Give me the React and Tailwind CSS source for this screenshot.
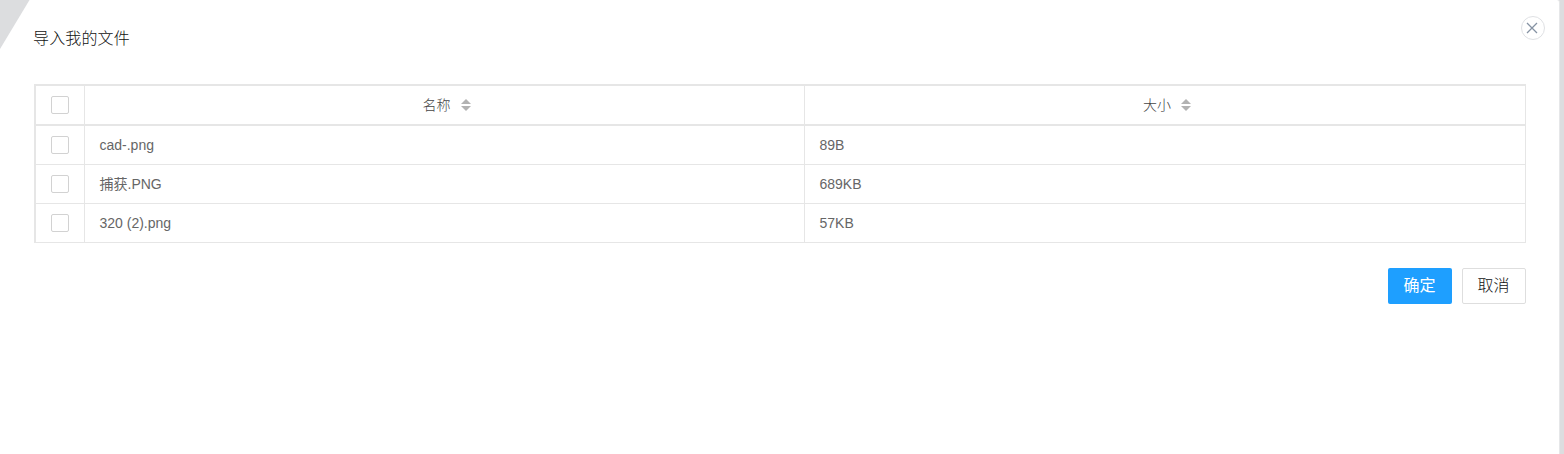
"use client";
import { useState } from "react";


const files=[
    {id:1,name:"cad-.png",size:"89B"},
    {id:2,name:"捕获.PNG",size:"689KB"},
    {id:3,name:"320 (2).png",size:"57KB"},
];

function Checkbox({checked,onChange}){
    return (
        <button onClick={onChange} className={checked?"block w-[18px] h-[18px] mx-auto rounded-[2px] border border-[#1E9FFF] bg-[#1E9FFF] cursor-pointer":"block w-[18px] h-[18px] mx-auto rounded-[2px] border border-[#d2d2d2] bg-white cursor-pointer"}></button>
    )
}

function SortIcon(){
    return (
        <svg width="10" height="12" viewBox="0 0 10 12" className="ml-[10px]" fill="#b2b2b2">
            <path d="M5 0L10 5H0Z" />
            <path d="M0 7H10L5 12Z" />
        </svg>
    )
}

function HeadCell({label}){
    return (
        <div className="flex items-center justify-center pl-[4px] font-light text-[#444]">
            <span>{label}</span>
            <SortIcon/>
        </div>
    )
}

export default function App(){
    const [selected,setselected]=useState([]);
    const all=selected.length===files.length;

    const toggle=(id)=>{
        setselected(selected.includes(id)?selected.filter((s)=>s!==id):[...selected,id]);
    }

    return (
        <div className="relative h-screen w-full overflow-hidden bg-[#dcdddf] pr-1 font-['Liberation_Sans','Noto_Sans_CJK_SC',sans-serif]">
            <div className="h-full rounded-tr-[3px] border-r border-[#e6e7e9] bg-white pl-[34px] pr-[33px]">
                <h1 className="pt-[27px] -ml-px text-[16px] leading-6 font-light tracking-[0.15px] text-[#111]">导入我的文件</h1>

                <div className="mt-[33px] grid grid-cols-[49px_720px_721px] grid-rows-[40px_39px_39px_39px] border-l-2 border-t-2 border-[#e6e6e6] text-[14px] text-[#666] *:flex *:flex-col *:justify-center *:border-r *:border-b *:border-[#e6e6e6]">
                    <div className="border-b-2!">
                        <Checkbox checked={all} onChange={()=>setselected(all?[]:files.map((f)=>f.id))}/>
                    </div>
                    <div className="border-b-2!"><HeadCell label="名称"/></div>
                    <div className="border-b-2!"><HeadCell label="大小"/></div>
                    {
                        files.map((file)=>[
                            <div key={file.id+"check"}>
                                <Checkbox checked={selected.includes(file.id)} onChange={()=>toggle(file.id)}/>
                            </div>,
                            <div key={file.id+"name"} className="pl-[14.5px]">{file.name}</div>,
                            <div key={file.id+"size"} className="pl-[14.5px]">{file.size}</div>
                        ])
                    }
                </div>

                <div className="mt-[25px] flex justify-end gap-[10px] text-[16px]">
                    <button className="h-9 w-16 rounded-[2px] bg-[#1E9FFF] pr-px text-white cursor-pointer">确定</button>
                    <button className="h-9 w-16 rounded-[2px] border border-[#dedede] bg-white pr-px font-light text-[#111] cursor-pointer">取消</button>
                </div>
            </div>

            {/* folded corner */}
            <svg width="30" height="49" viewBox="0 0 30 49" className="absolute left-0 top-0">
                <path d="M0 0H29.5L0 49Z" fill="#dcdddf" />
            </svg>

            <button className="absolute right-[19px] top-4 flex h-6 w-6 items-center justify-center rounded-full border border-[#dfe1e4] bg-white cursor-pointer">
                <svg width="12" height="12" viewBox="0 0 12 12" className="-ml-[2px]" stroke="#8592a3" strokeWidth="1.3">
                    <path d="M1 1L11 11M11 1L1 11" />
                </svg>
            </button>
        </div>
    )
}
